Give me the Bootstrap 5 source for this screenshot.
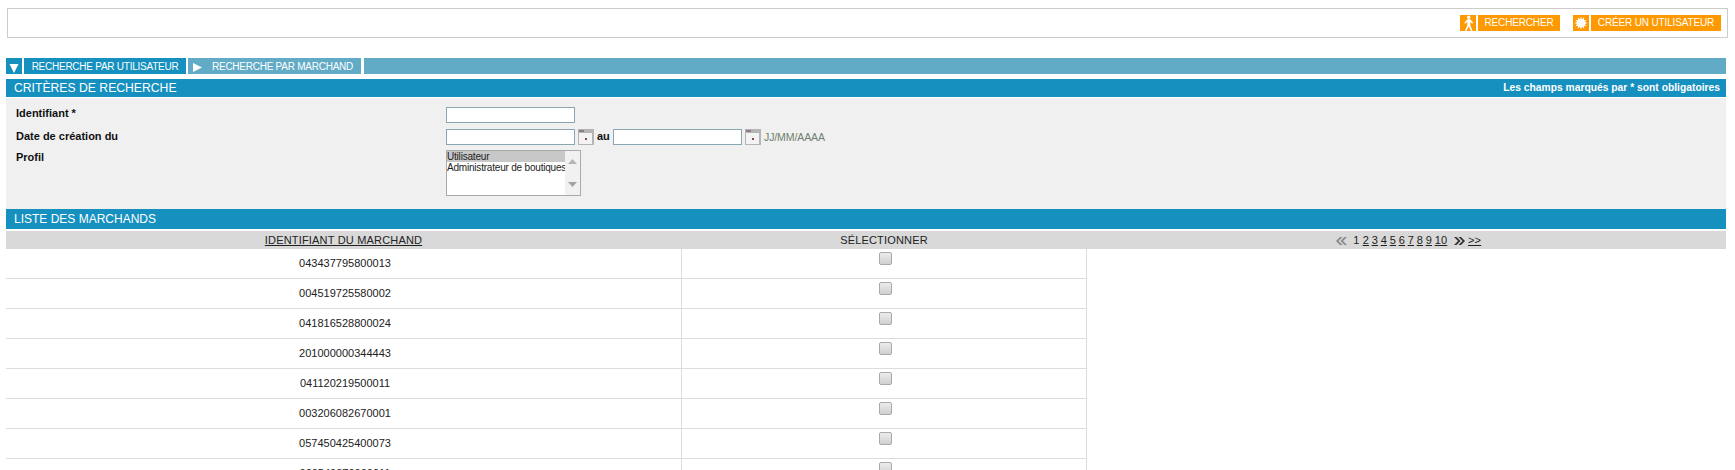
<!DOCTYPE html>
<html lang="fr">
<head>
<meta charset="utf-8">
<title>Recherche</title>
<link href="https://cdn.jsdelivr.net/npm/bootstrap@5.3.0/dist/css/bootstrap.min.css" rel="stylesheet">
<style>
html,body{height:470px;overflow:hidden}
body{background:#fff;font-family:"Liberation Sans",Arial,sans-serif;font-size:11px;color:#222;padding:8px 9px 0 6px;line-height:1.2}
.top-box{height:30px;border:1px solid #ccc;padding:6px 6px 0 0;margin:0 -2px 20px 1px}
.act{color:#fff;font-size:10px;letter-spacing:-.15px;text-decoration:none;height:16px;line-height:16px}
.act-ico{width:16px;height:16px;background:#f90;display:block}
.act-lab{background:#f90;margin-left:2px;text-align:center;display:block;height:16px;white-space:nowrap}
.act1{margin-right:13px}
.act1 .act-lab{width:82px}.act2 .act-lab{width:130px}
.tabs{height:16px;margin-bottom:5px;color:#fff;font-size:10px;letter-spacing:-.25px;line-height:17px;white-space:nowrap}
.tab-ico{width:16px;height:16px;display:block;flex:none}
.tab-blue{background:#1590bf}
.tab-pale{background:#62abc6}
.tab-lab{display:block;height:16px;margin-left:2px;text-align:center}
.w1{width:162px;flex:none}
.tab2{margin-left:2px;width:173px;background:#62abc6;flex:none}
.tab2 .tab-lab{margin-left:0;width:157px}
.tab-rest{margin-left:3px}
.ttl{background:#1590bf;color:#fff;height:18px;line-height:18px;padding:0 6px 0 8px;font-size:12.2px}
.ttl small{font-size:10.3px;font-weight:bold}
.panel-f{background:#f0f0f0;margin-top:1px;height:111px;padding:9px 0 0 10px;font-weight:bold;color:#111}
.lab-f{width:430px;flex:none}
.frow{margin-bottom:6px;height:16px}
.frow3{height:46px}
.inp{width:129px;height:16px;border:1px solid #8aa6b2;background:#fff;padding:0;border-radius:0;display:block;flex:none}
.cal{margin:0 3px;flex:none;display:block}
.au{width:16px;flex:none}
.hint{font-weight:normal;color:#6f7f6f;font-size:10.5px;letter-spacing:-.1px}
.sel{width:135px;height:46px;border:1px solid #aaa;background:#fff;font-weight:normal;font-size:10px;letter-spacing:-.2px;line-height:11px;color:#222;margin-top:-1px}
.sel-list{width:118px;flex:none;overflow:hidden;white-space:nowrap}
.sel-on{background:#c8c8c8}
.sel-bar{flex:1;background:#f1f1f1;padding:8px 0;color:#a3a3a3}
.ttl2{height:20px;line-height:20px;font-size:12px}
.tbl-m{margin:2px 0 0;table-layout:fixed;width:100%;border-collapse:separate;border-spacing:0}
.tbl-m th{background:#d9d9d9;height:18px;padding:0;font-weight:normal;text-align:center;color:#222;font-size:11px;letter-spacing:.18px;line-height:17px;border:0}
.tbl-m th a{color:#222}
.tbl-m td{height:30px;padding:0;border:0;border-bottom:1px solid #ddd;vertical-align:top;text-align:center;color:#222;font-size:11px;line-height:29px}
.tbl-m td.c1{padding-left:3px}
.tbl-m td.c2{border-left:1px solid #ddd;border-right:1px solid #ddd}
.tbl-m td.c3{border-bottom:0}
.ck{display:block;width:13px;height:13px;margin:3px 0 0 197px;border:1px solid #a9a9a9;border-radius:2px;background:linear-gradient(#ececec,#d0d0d0)}
.pgn{letter-spacing:0}
.tbl-m th.pgn a{margin-right:2.700px}
.pgn svg{vertical-align:-1px}
.pgn .pg-a{margin:0 6px 0 7px}
.pgn .pg-b{margin:0 3px 0 4px}
</style>
</head>
<body>
<div class="top-box d-flex justify-content-end">
  <a href="#" class="act act1 d-flex">
    <span class="act-ico"><svg width="16" height="16" viewBox="0 0 16 16"><circle cx="8.700" cy="2.300" r="1.700" fill="#fff"/><path d="M7.500 4.200 4.300 7.800l.9 1 2.100-2v3.700L4.800 15.800h1.800l2.200-4.300 2 4.300h1.800l-2.300-5.600V7l2 1.700.8-.9-2.700-3.600z" fill="#fff"/></svg></span>
    <span class="act-lab">RECHERCHER</span>
  </a>
  <a href="#" class="act act2 d-flex">
    <span class="act-ico"><svg width="16" height="16" viewBox="0 0 16 16"><polygon fill="#fff" points="14.500,8 11.860,9.040 13.630,11.250 10.830,10.830 11.250,13.630 9.040,11.860 8,14.500 6.960,11.860 4.750,13.630 5.170,10.830 2.370,11.250 4.140,9.040 1.500,8 4.140,6.960 2.370,4.750 5.170,5.170 4.750,2.370 6.960,4.140 8,1.500 9.040,4.140 11.250,2.370 10.830,5.170 13.630,4.750 11.860,6.960"/></svg></span>
    <span class="act-lab">CRÉER UN UTILISATEUR</span>
  </a>
</div>

<div class="tabs d-flex">
  <span class="tab-ico tab-blue"><svg width="16" height="16" viewBox="0 0 16 16"><path d="M3.500 5h9L8 14z" fill="#fff"/></svg></span>
  <span class="tab-lab tab-blue w1">RECHERCHE PAR UTILISATEUR</span>
  <div class="tab2 d-flex">
    <span class="tab-ico"><svg width="16" height="16" viewBox="0 0 16 16"><path d="M5 4v9l9-4.500z" fill="#fff"/></svg></span>
    <span class="tab-lab">RECHERCHE PAR MARCHAND</span>
  </div>
  <span class="tab-rest tab-pale flex-grow-1"></span>
</div>

<div class="ttl d-flex justify-content-between">
  <span>CRITÈRES DE RECHERCHE</span>
  <small>Les champs marqués par * sont obligatoires</small>
</div>
<div class="panel-f">
  <div class="frow d-flex align-items-start">
    <div class="lab-f">Identifiant *</div>
    <input class="inp" type="text" aria-label="Identifiant">
  </div>
  <div class="frow d-flex align-items-center">
    <div class="lab-f">Date de création du</div>
    <input class="inp" type="text" aria-label="Du">
    <svg class="cal" width="16" height="16" viewBox="0 0 16 16"><rect width="16" height="16" fill="#b5b5b5"/><rect x="1" y="4" width="13" height="11" fill="#f3f3f3"/><rect x="1" y="1" width="5" height="2" fill="#8e7a8a"/><rect x="7" y="9" width="2" height="2" fill="#8a3f5c"/></svg>
    <span class="au">au</span>
    <input class="inp" type="text" aria-label="Au">
    <svg class="cal" width="16" height="16" viewBox="0 0 16 16"><rect width="16" height="16" fill="#b5b5b5"/><rect x="1" y="4" width="13" height="11" fill="#f3f3f3"/><rect x="1" y="1" width="5" height="2" fill="#8e7a8a"/><rect x="7" y="9" width="2" height="2" fill="#8a3f5c"/></svg>
    <span class="hint">JJ/MM/AAAA</span>
  </div>
  <div class="frow frow3 d-flex align-items-start">
    <div class="lab-f">Profil</div>
    <div class="sel d-flex">
      <div class="sel-list">
        <div class="sel-on">Utilisateur</div>
        <div>Administrateur de boutiques</div>
      </div>
      <div class="sel-bar d-flex flex-column justify-content-between align-items-center">
        <svg width="9" height="5" viewBox="0 0 9 5"><path d="M0 5 4.500 0 9 5z" fill="#b5b5b5"/></svg>
        <svg width="9" height="5" viewBox="0 0 9 5"><path d="M0 0 4.500 5 9 0z" fill="#a3a3a3"/></svg>
      </div>
    </div>
  </div>
</div>

<div class="ttl ttl2">LISTE DES MARCHANDS</div>
<table class="tbl-m">
  <colgroup><col style="width:675px"><col style="width:406px"><col></colgroup>
  <thead>
    <tr>
      <th><a href="#">IDENTIFIANT DU MARCHAND</a></th>
      <th>SÉLECTIONNER</th>
      <th class="pgn"><svg class="pg-a" width="11" height="8" viewBox="0 0 11 8"><path d="M4 0 0 4l4 4h2.500l-4-4 4-4zM8.500 0l-4 4 4 4H11L7 4l4-4z" fill="#8a8a8a"/></svg>1 <a href="#">2</a><a href="#">3</a><a href="#">4</a><a href="#">5</a><a href="#">6</a><a href="#">7</a><a href="#">8</a><a href="#">9</a><a href="#">10</a><svg class="pg-b" width="11" height="8" viewBox="0 0 11 8"><path d="M0 0h2.500l4 4-4 4H0l4-4zM4.500 0H7l4 4-4 4H4.500l4-4z" fill="#333"/></svg><a href="#">&gt;&gt;</a></th>
    </tr>
  </thead>
  <tbody>
    <tr><td class="c1">043437795800013</td><td class="c2"><span class="ck"></span></td><td class="c3"></td></tr>
    <tr><td class="c1">004519725580002</td><td class="c2"><span class="ck"></span></td><td class="c3"></td></tr>
    <tr><td class="c1">041816528800024</td><td class="c2"><span class="ck"></span></td><td class="c3"></td></tr>
    <tr><td class="c1">201000000344443</td><td class="c2"><span class="ck"></span></td><td class="c3"></td></tr>
    <tr><td class="c1">041120219500011</td><td class="c2"><span class="ck"></span></td><td class="c3"></td></tr>
    <tr><td class="c1">003206082670001</td><td class="c2"><span class="ck"></span></td><td class="c3"></td></tr>
    <tr><td class="c1">057450425400073</td><td class="c2"><span class="ck"></span></td><td class="c3"></td></tr>
    <tr><td class="c1">000549870000011</td><td class="c2"><span class="ck"></span></td><td class="c3"></td></tr>
  </tbody>
</table>
<script src="https://cdn.jsdelivr.net/npm/bootstrap@5.3.0/dist/js/bootstrap.bundle.min.js"></script>
</body>
</html>
